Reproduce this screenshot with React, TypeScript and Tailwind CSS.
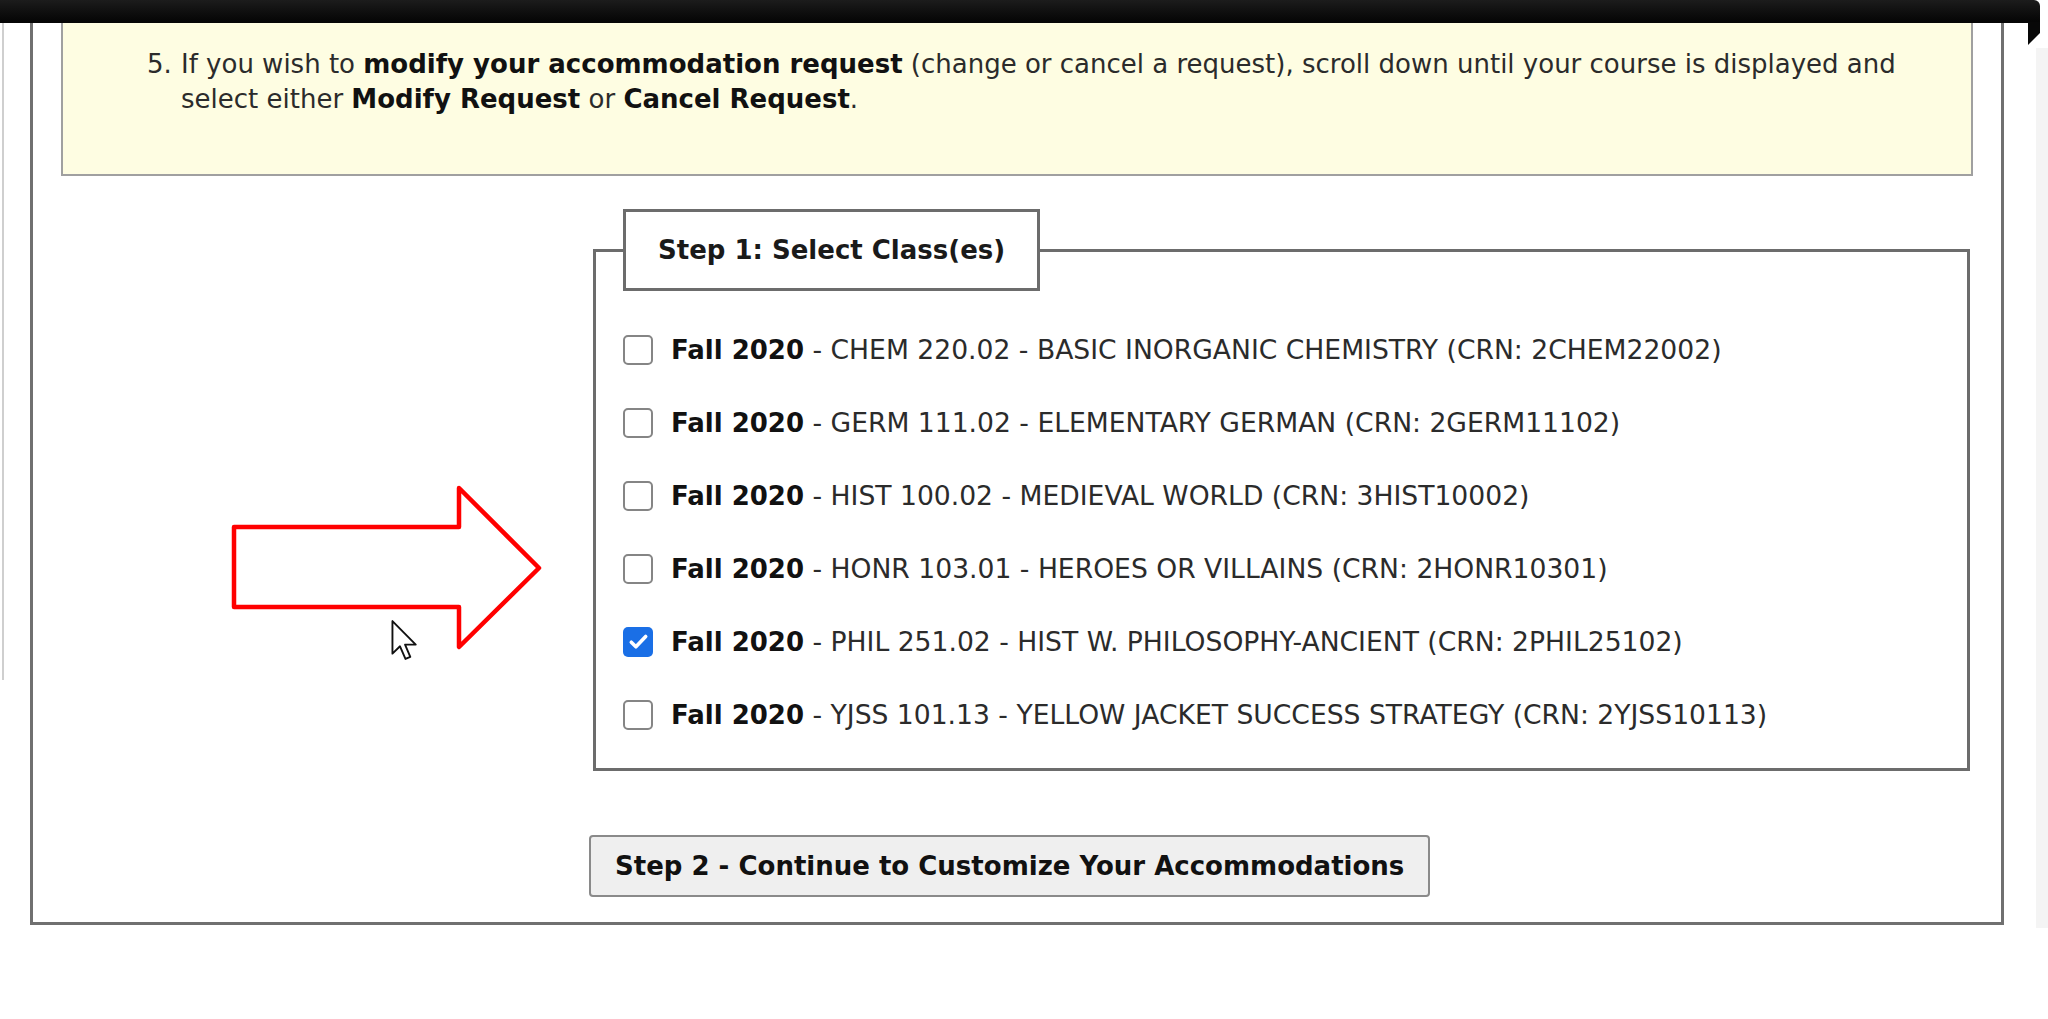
import React from "react";

// Step 1 / Step 2 — class selection screen (accommodation request)

type Course = { code: string; title: string; crn: string; checked?: boolean };

const COURSES: Course[] = [
  { code: "CHEM 220.02", title: "BASIC INORGANIC CHEMISTRY", crn: "2CHEM22002" },
  { code: "GERM 111.02", title: "ELEMENTARY GERMAN", crn: "2GERM11102" },
  { code: "HIST 100.02", title: "MEDIEVAL WORLD", crn: "3HIST10002" },
  { code: "HONR 103.01", title: "HEROES OR VILLAINS", crn: "2HONR10301" },
  { code: "PHIL 251.02", title: "HIST W. PHILOSOPHY-ANCIENT", crn: "2PHIL25102", checked: true },
  { code: "YJSS 101.13", title: "YELLOW JACKET SUCCESS STRATEGY", crn: "2YJSS10113" },
];

function Box({ checked }: { checked?: boolean }) {
  if (checked)
    return (
      <span className="w-[30px] h-[30px] shrink-0 rounded-[5px] bg-[#1a6fe6] flex items-center justify-center">
        <svg viewBox="0 0 16 16" className="w-[23px] h-[23px]">
          <path d="M3 8.5l3.2 3.2L13 4.5" fill="none" stroke="#fff" strokeWidth="2.5" strokeLinecap="round" strokeLinejoin="round" />
        </svg>
      </span>
    );
  return <span className="w-[30px] h-[30px] shrink-0 rounded-[5px] border-2 border-[#858585] bg-white" />;
}

function Arrow() {
  return (
    <svg className="absolute left-[228px] top-[482px] w-[316px] h-[172px]" viewBox="228 482 316 172">
      <polygon points="234,527 459,527 459,488 539,568 459,647 459,607 234,607" fill="none" stroke="#ff0000" strokeWidth="4.5" strokeLinejoin="round" />
    </svg>
  );
}

function Cursor() {
  return (
    <svg className="absolute left-[390px] top-[619px] w-[28px] h-[42px]" viewBox="0 0 13 20">
      <path d="M1 1v15.5l3.6-3.5 2.6 6 2.3-1-2.5-5.8h5.1Z" fill="#fff" stroke="#111" strokeWidth="0.9" strokeLinejoin="round" />
    </svg>
  );
}

export default function App() {
  return (
    <div className="relative w-[2048px] h-[1019px] overflow-hidden bg-white text-[#2b2b2b] font-['DejaVu_Sans','Liberation_Sans',sans-serif]">
      {/* video bar */}
      <div className="h-[23px] mr-[8px] rounded-tr-[6px] bg-gradient-to-b from-[#1c1c1c] to-[#050505]" />
      <svg className="absolute left-[2026px] top-[22px] w-[14px] h-[24px]" viewBox="0 0 14 24">
        <polygon points="2,0 2,23 14,11 14,0" fill="#080808" />
      </svg>
      <div className="absolute left-[2px] top-[23px] w-[2px] h-[657px] bg-[#cfcfcf]" />
      <div className="absolute left-[2036px] top-[48px] w-[12px] h-[880px] bg-[#f4f4f4]" />

      {/* page box */}
      <div className="ml-[30px] w-[1974px] h-[902px] border-x-[3px] border-b-[3px] border-[#707070]">
        <div className="mx-[28px] h-[153px] border-x-2 border-b-2 border-[#a0a0a0] bg-[#fefde2] pt-[24px] pl-[84px] text-[26px] leading-[35px]">
          <div className="flex">
            <span className="w-[34px] shrink-0">5.</span>
            <p>
              If you wish to <b className="text-[#111]">modify your accommodation request</b> (change or cancel a request), scroll down until your course is displayed and
              <br />
              select either <b className="text-[#111]">Modify Request</b> or <b className="text-[#111]">Cancel Request</b>.
            </p>
          </div>
        </div>

        <fieldset className="ml-[560px] mt-[33px] w-[1377px] border-[3px] border-[#6c6c6c] pl-[27px] pt-[22px] pb-[17px]">
          <legend className="h-[82px] px-[32px] border-[3px] border-[#6c6c6c] bg-white flex items-center text-[26px] font-bold text-[#1a1a1a]">
            Step 1: Select Class(es)
          </legend>
          {COURSES.map((c) => (
            <label key={c.crn} className="h-[73px] flex items-center text-[26.6px]">
              <Box checked={c.checked} />
              <span className="ml-[18px] whitespace-nowrap">
                <b className="text-[26px] text-[#111]">Fall 2020</b> - {c.code} - {c.title} (CRN: {c.crn})
              </span>
            </label>
          ))}
        </fieldset>

        <button className="ml-[556px] mt-[64px] h-[62px] px-[24px] rounded-[4px] border-2 border-[#8a8a8a] bg-[#efefef] text-[26px] font-bold text-[#111]">
          Step 2 - Continue to Customize Your Accommodations
        </button>
      </div>

      <Arrow />
      <Cursor />
    </div>
  );
}
